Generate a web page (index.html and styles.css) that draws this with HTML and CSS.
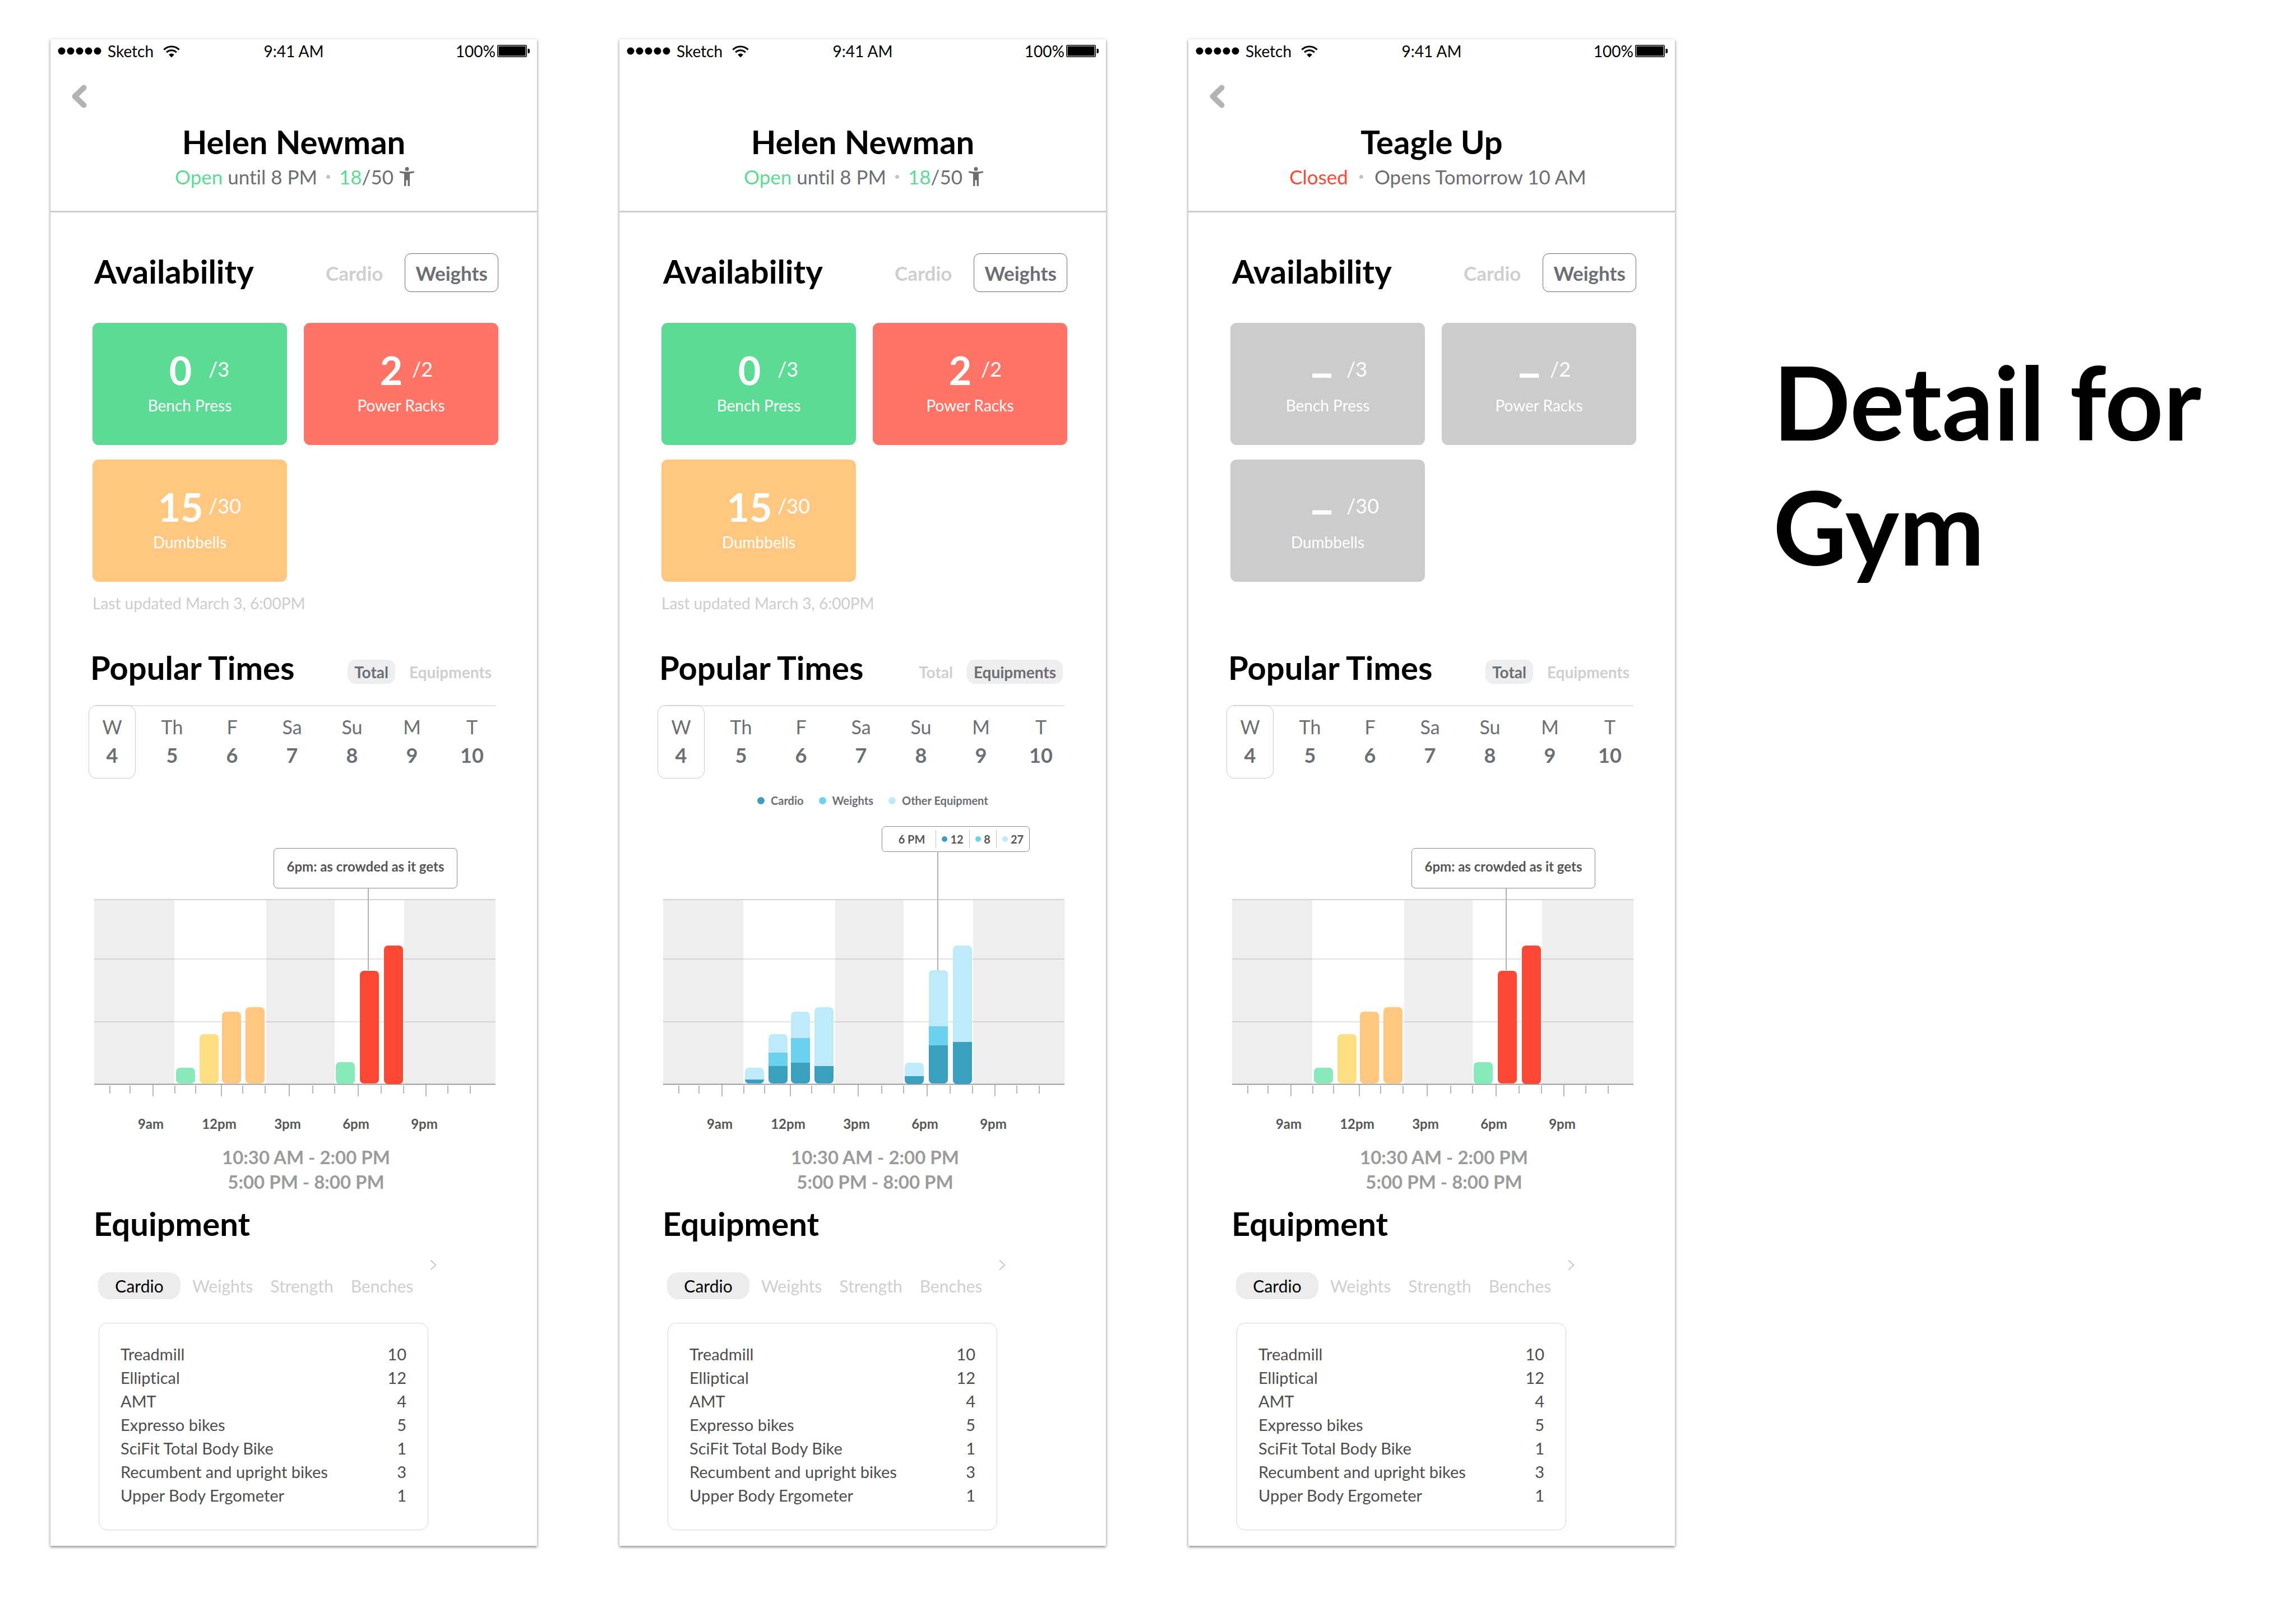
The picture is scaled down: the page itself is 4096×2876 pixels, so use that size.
FILE: index.html
```html
<!DOCTYPE html>
<html lang="en">
<head>
<meta charset="utf-8">
<meta name="viewport" content="width=device-width, initial-scale=1">
<title>Detail for Gym</title>
<link rel="stylesheet" href="styles.css">
</head>
<body>
<svg class="sprite" aria-hidden="true">
  <symbol id="wifi" viewBox="0 0 30 22">
    <path d="M2 8.2a18.4 18.4 0 0 1 26 0" fill="none" stroke="#000" stroke-width="3"/>
    <path d="M6.6 12.8a11.9 11.9 0 0 1 16.8 0" fill="none" stroke="#000" stroke-width="3"/>
    <path d="M15 21.6l-4.6-4.8a6.6 6.6 0 0 1 9.2 0z"/>
  </symbol>
  <symbol id="battery" viewBox="0 0 58 22">
    <rect x=".75" y=".75" width="51.5" height="20.5" rx="2" fill="none" stroke="#000" stroke-width="1.5"/>
    <rect x="2.5" y="2.5" width="48" height="17" rx="1"/>
    <path d="M54.500 7h1.500a2 2 0 0 1 2 2v4a2 2 0 0 1-2 2h-1.500z"/>
  </symbol>
  <symbol id="dots" viewBox="0 0 78 14">
    <circle cx="7" cy="7" r="6.500"/><circle cx="23" cy="7" r="6.500"/><circle cx="39" cy="7" r="6.500"/><circle cx="55" cy="7" r="6.500"/><circle cx="71" cy="7" r="6.500"/>
  </symbol>
  <symbol id="back" viewBox="0 0 28 42">
    <path d="M22.500 5.500L6.500 21l16 15.500" fill="none" stroke="#b3b3b3" stroke-width="10" stroke-linecap="round" stroke-linejoin="round"/>
  </symbol>
  <symbol id="next" viewBox="0 0 14 20">
    <path d="M2 1.500l9.500 8.500L2 18.500" fill="none" stroke="#c8c8c8" stroke-width="2"/>
  </symbol>
  <symbol id="person" viewBox="0 0 28 34">
    <circle cx="14" cy="3.500" r="3.500"/>
    <path d="M1.300 7.200Q14 9.800 26.700 7.200L27.300 10Q23 11.300 19 11.700V34H15.600V23.500H12.400V34H9V11.700Q5 11.300 .7 10z"/>
  </symbol>
  <symbol id="plot" viewBox="0 0 716 352">
    <path d="M0 0h143v330H0zM307 0h122v330H307zM553 0h163v330H553z" fill="#eee"/>
    <path d="M0 1h716" stroke="#d2d2d2" stroke-width="2"/>
    <path d="M0 107h716M0 219h716" stroke="#000" stroke-opacity=".11" stroke-width="2"/>
    <path d="M0 330.500h716" stroke="#9b9b9b" stroke-width="2"/>
    <path d="M28 333v14M64 333v14M144 333v14M181 333v14M265 333v14M305 333v14M390 333v14M429 333v14M512 333v14M552 333v14M631 333v14M671 333v14M105 330v22M227 330v22M348 330v22M471 330v22M592 330v22" stroke="#a0a0a0" stroke-width="1.500"/>
  </symbol>
  <symbol id="total-bars" viewBox="0 0 716 352">
    <g fill="#88eaba"><rect x="146" y="301" width="34" height="28" rx="7"/><rect x="431" y="291" width="34" height="39" rx="7"/></g>
    <rect x="188" y="241" width="34" height="88" rx="7" fill="#fede82"/>
    <g fill="#ffc77f"><rect x="228" y="201" width="34" height="128" rx="7"/><rect x="270" y="193" width="34" height="136" rx="7"/></g>
    <g fill="#fd4835"><rect x="474" y="128" width="34" height="201" rx="7"/><rect x="517" y="83" width="34" height="247" rx="7"/></g>
  </symbol>
  <symbol id="stacked-bars" viewBox="0 0 716 352">
    <g fill="#beeafa"><rect x="146" y="301" width="34" height="28" rx="7"/><rect x="188" y="241" width="34" height="88" rx="7"/><rect x="228" y="201" width="34" height="128" rx="7"/><rect x="270" y="193" width="34" height="136" rx="7"/><rect x="431" y="292" width="34" height="37" rx="7"/><rect x="474" y="127" width="34" height="202" rx="7"/><rect x="517" y="83" width="34" height="246" rx="7"/></g>
    <g fill="#6bd1ef"><path d="M188 274h34v30h-34zM228 248h34v50h-34zM474 227h34v40h-34z"/></g>
    <g fill="#3b9fbe"><path d="M146 322h34a7 7 0 0 1-7 7h-20a7 7 0 0 1-7-7z"/><path d="M188 298h34v24a7 7 0 0 1-7 7h-20a7 7 0 0 1-7-7z"/><path d="M228 292h34v30a7 7 0 0 1-7 7h-20a7 7 0 0 1-7-7z"/><path d="M270 298h34v24a7 7 0 0 1-7 7h-20a7 7 0 0 1-7-7z"/><path d="M431 316h34v7a7 7 0 0 1-7 7h-20a7 7 0 0 1-7-7z"/><path d="M474 261h34v61a7 7 0 0 1-7 7h-20a7 7 0 0 1-7-7z"/><path d="M517 255h34v68a7 7 0 0 1-7 7h-20a7 7 0 0 1-7-7z"/></g>
  </symbol>
</svg>

<main class="board">

  <article class="phone">
    <div class="status">
      <span class="status-left"><svg class="dots"><use href="#dots"/></svg><span>Sketch</span><svg class="wifi"><use href="#wifi"/></svg></span>
      <span class="status-time">9:41 AM</span>
      <span class="status-right"><span>100%</span><svg class="battery"><use href="#battery"/></svg></span>
    </div>
    <header class="gym">
      <nav class="gym-nav"><button class="back" aria-label="Back"><svg><use href="#back"/></svg></button></nav>
      <h2 class="gym-name">Helen Newman</h2>
      <p class="gym-state"><span><span class="is-open">Open</span> until 8 PM</span><i class="sep"></i><span><span class="is-open">18</span>/50</span><svg class="person"><use href="#person"/></svg></p>
    </header>
    <section class="availability">
      <div class="section-head">
        <h3 class="heading">Availability</h3>
        <div class="switch"><button class="switch-item">Cardio</button><button class="switch-item is-active">Weights</button></div>
      </div>
      <div class="availability-body">
        <div class="tiles">
          <div class="tile tile-green"><p class="count"><b>0</b><span>/3</span></p><p class="tile-name">Bench Press</p></div>
          <div class="tile tile-red"><p class="count count-tight"><b>2</b><span>/2</span></p><p class="tile-name">Power Racks</p></div>
          <div class="tile tile-orange"><p class="count"><b>15</b><span>/30</span></p><p class="tile-name">Dumbbells</p></div>
        </div>
        <p class="updated">Last updated March 3, 6:00PM</p>
      </div>
    </section>
    <section class="popular">
      <div class="section-head">
        <h3 class="heading">Popular Times</h3>
        <div class="pills"><button class="pill is-active">Total</button><button class="pill">Equipments</button></div>
      </div>
      <div class="days">
        <button class="day is-active"><span>W</span><b>4</b></button><button class="day"><span>Th</span><b>5</b></button><button class="day"><span>F</span><b>6</b></button><button class="day"><span>Sa</span><b>7</b></button><button class="day"><span>Su</span><b>8</b></button><button class="day"><span>M</span><b>9</b></button><button class="day"><span>T</span><b>10</b></button>
      </div>
      <figure class="chart">
        <div class="chart-top"></div>
        <svg class="plot" viewBox="0 0 716 352"><use href="#plot"/><use href="#total-bars"/></svg>
        <div class="tip tip-note">6pm: as crowded as it gets</div>
        <div class="hours-axis"><span>9am</span><span>12pm</span><span>3pm</span><span>6pm</span><span>9pm</span></div>
        <figcaption class="hours">10:30 AM - 2:00 PM<br>5:00 PM - 8:00 PM</figcaption>
      </figure>
    </section>
    <section class="equipment">
      <h3 class="heading">Equipment</h3>
      <div class="more"><button class="next" aria-label="More equipment"><svg><use href="#next"/></svg></button></div>
      <div class="tabs"><button class="tab is-active">Cardio</button><button class="tab">Weights</button><button class="tab">Strength</button><button class="tab">Benches</button></div>
      <div class="list">
        <table>
          <tr><th scope="row">Treadmill</th><td>10</td></tr>
          <tr><th scope="row">Elliptical</th><td>12</td></tr>
          <tr><th scope="row">AMT</th><td>4</td></tr>
          <tr><th scope="row">Expresso bikes</th><td>5</td></tr>
          <tr><th scope="row">SciFit Total Body Bike</th><td>1</td></tr>
          <tr><th scope="row">Recumbent and upright bikes</th><td>3</td></tr>
          <tr><th scope="row">Upper Body Ergometer</th><td>1</td></tr>
        </table>
      </div>
    </section>
  </article>

  <article class="phone">
    <div class="status">
      <span class="status-left"><svg class="dots"><use href="#dots"/></svg><span>Sketch</span><svg class="wifi"><use href="#wifi"/></svg></span>
      <span class="status-time">9:41 AM</span>
      <span class="status-right"><span>100%</span><svg class="battery"><use href="#battery"/></svg></span>
    </div>
    <header class="gym">
      <nav class="gym-nav"></nav>
      <h2 class="gym-name">Helen Newman</h2>
      <p class="gym-state"><span><span class="is-open">Open</span> until 8 PM</span><i class="sep"></i><span><span class="is-open">18</span>/50</span><svg class="person"><use href="#person"/></svg></p>
    </header>
    <section class="availability">
      <div class="section-head">
        <h3 class="heading">Availability</h3>
        <div class="switch"><button class="switch-item">Cardio</button><button class="switch-item is-active">Weights</button></div>
      </div>
      <div class="availability-body">
        <div class="tiles">
          <div class="tile tile-green"><p class="count"><b>0</b><span>/3</span></p><p class="tile-name">Bench Press</p></div>
          <div class="tile tile-red"><p class="count count-tight"><b>2</b><span>/2</span></p><p class="tile-name">Power Racks</p></div>
          <div class="tile tile-orange"><p class="count"><b>15</b><span>/30</span></p><p class="tile-name">Dumbbells</p></div>
        </div>
        <p class="updated">Last updated March 3, 6:00PM</p>
      </div>
    </section>
    <section class="popular">
      <div class="section-head">
        <h3 class="heading">Popular Times</h3>
        <div class="pills pills-inset"><button class="pill">Total</button><button class="pill is-active">Equipments</button></div>
      </div>
      <div class="days">
        <button class="day is-active"><span>W</span><b>4</b></button><button class="day"><span>Th</span><b>5</b></button><button class="day"><span>F</span><b>6</b></button><button class="day"><span>Sa</span><b>7</b></button><button class="day"><span>Su</span><b>8</b></button><button class="day"><span>M</span><b>9</b></button><button class="day"><span>T</span><b>10</b></button>
      </div>
      <figure class="chart">
        <div class="chart-top">
          <ul class="legend"><li class="key-cardio">Cardio</li><li class="key-weights">Weights</li><li class="key-other">Other Equipment</li></ul>
        </div>
        <svg class="plot" viewBox="0 0 716 352"><use href="#plot"/><use href="#stacked-bars"/></svg>
        <div class="tip tip-split"><span class="tip-hour">6 PM</span><span class="key-cardio">12</span><span class="key-weights">8</span><span class="key-other">27</span></div>
        <div class="hours-axis"><span>9am</span><span>12pm</span><span>3pm</span><span>6pm</span><span>9pm</span></div>
        <figcaption class="hours">10:30 AM - 2:00 PM<br>5:00 PM - 8:00 PM</figcaption>
      </figure>
    </section>
    <section class="equipment">
      <h3 class="heading">Equipment</h3>
      <div class="more"><button class="next" aria-label="More equipment"><svg><use href="#next"/></svg></button></div>
      <div class="tabs"><button class="tab is-active">Cardio</button><button class="tab">Weights</button><button class="tab">Strength</button><button class="tab">Benches</button></div>
      <div class="list">
        <table>
          <tr><th scope="row">Treadmill</th><td>10</td></tr>
          <tr><th scope="row">Elliptical</th><td>12</td></tr>
          <tr><th scope="row">AMT</th><td>4</td></tr>
          <tr><th scope="row">Expresso bikes</th><td>5</td></tr>
          <tr><th scope="row">SciFit Total Body Bike</th><td>1</td></tr>
          <tr><th scope="row">Recumbent and upright bikes</th><td>3</td></tr>
          <tr><th scope="row">Upper Body Ergometer</th><td>1</td></tr>
        </table>
      </div>
    </section>
  </article>

  <article class="phone">
    <div class="status">
      <span class="status-left"><svg class="dots"><use href="#dots"/></svg><span>Sketch</span><svg class="wifi"><use href="#wifi"/></svg></span>
      <span class="status-time">9:41 AM</span>
      <span class="status-right"><span>100%</span><svg class="battery"><use href="#battery"/></svg></span>
    </div>
    <header class="gym">
      <nav class="gym-nav"><button class="back" aria-label="Back"><svg><use href="#back"/></svg></button></nav>
      <h2 class="gym-name">Teagle Up</h2>
      <p class="gym-state gym-state-closed"><span class="is-closed">Closed</span><i class="sep"></i><span>Opens Tomorrow 10 AM</span></p>
    </header>
    <section class="availability">
      <div class="section-head">
        <h3 class="heading">Availability</h3>
        <div class="switch"><button class="switch-item">Cardio</button><button class="switch-item is-active">Weights</button></div>
      </div>
      <div class="availability-body">
        <div class="tiles">
          <div class="tile"><p class="count count-empty"><b>–</b><span>/3</span></p><p class="tile-name">Bench Press</p></div>
          <div class="tile"><p class="count count-empty count-tight"><b>–</b><span>/2</span></p><p class="tile-name">Power Racks</p></div>
          <div class="tile"><p class="count count-empty"><b>–</b><span>/30</span></p><p class="tile-name">Dumbbells</p></div>
        </div>
      </div>
    </section>
    <section class="popular">
      <div class="section-head">
        <h3 class="heading">Popular Times</h3>
        <div class="pills"><button class="pill is-active">Total</button><button class="pill">Equipments</button></div>
      </div>
      <div class="days">
        <button class="day is-active"><span>W</span><b>4</b></button><button class="day"><span>Th</span><b>5</b></button><button class="day"><span>F</span><b>6</b></button><button class="day"><span>Sa</span><b>7</b></button><button class="day"><span>Su</span><b>8</b></button><button class="day"><span>M</span><b>9</b></button><button class="day"><span>T</span><b>10</b></button>
      </div>
      <figure class="chart">
        <div class="chart-top"></div>
        <svg class="plot" viewBox="0 0 716 352"><use href="#plot"/><use href="#total-bars"/></svg>
        <div class="tip tip-note">6pm: as crowded as it gets</div>
        <div class="hours-axis"><span>9am</span><span>12pm</span><span>3pm</span><span>6pm</span><span>9pm</span></div>
        <figcaption class="hours">10:30 AM - 2:00 PM<br>5:00 PM - 8:00 PM</figcaption>
      </figure>
    </section>
    <section class="equipment">
      <h3 class="heading">Equipment</h3>
      <div class="more"><button class="next" aria-label="More equipment"><svg><use href="#next"/></svg></button></div>
      <div class="tabs"><button class="tab is-active">Cardio</button><button class="tab">Weights</button><button class="tab">Strength</button><button class="tab">Benches</button></div>
      <div class="list">
        <table>
          <tr><th scope="row">Treadmill</th><td>10</td></tr>
          <tr><th scope="row">Elliptical</th><td>12</td></tr>
          <tr><th scope="row">AMT</th><td>4</td></tr>
          <tr><th scope="row">Expresso bikes</th><td>5</td></tr>
          <tr><th scope="row">SciFit Total Body Bike</th><td>1</td></tr>
          <tr><th scope="row">Recumbent and upright bikes</th><td>3</td></tr>
          <tr><th scope="row">Upper Body Ergometer</th><td>1</td></tr>
        </table>
      </div>
    </section>
  </article>

  <h1 class="board-title">Detail for Gym</h1>
</main>
</body>
</html>
```
FILE: styles.css
```css
* { box-sizing: border-box; }

body {
  margin: 0;
  background: #fff;
  color: #000;
  font: 400 28px/34px Lato, "Liberation Sans", sans-serif;
  font-variant-ligatures: none;
}

h1, h2, h3, p, ul, figure { margin: 0; padding: 0; }
ul { list-style: none; }
svg { display: block; }

button {
  margin: 0;
  padding: 0;
  border: 0;
  background: none;
  color: inherit;
  font: inherit;
  cursor: pointer;
}

.sprite { position: absolute; width: 0; height: 0; }

.board {
  display: grid;
  grid-template-columns: 868fr 868fr 868fr 961fr;
  align-items: start;
  column-gap: 147px;
  padding: 70px 0 110px 90px;
}

.board-title {
  padding: 534px 0 0 28px;
  font-size: 182px;
  line-height: 223px;
  font-weight: 700;
}

.phone {
  padding: 4px 0 28px;
  background: #fff;
  box-shadow: 0 2px 5px rgba(0, 0, 0, .5);
}

/* Status bar */
.status {
  display: grid;
  grid-template-columns: 1fr auto 1fr;
  align-items: center;
  padding: 0 13px;
}
.status-left, .status-right { display: flex; align-items: center; }
.status-right { justify-content: flex-end; gap: 3px; }
.dots { width: 78px; height: 14px; margin-right: 11px; }
.wifi { width: 32px; height: 23px; margin-left: 16px; }
.battery { width: 58px; height: 22px; }

/* Gym header */
.gym {
  padding-bottom: 39px;
  border-bottom: 3px solid #cdcdcd;
  text-align: center;
}
.gym-nav { display: flex; min-height: 85px; padding: 43px 37px 0; }
.back svg { width: 28px; height: 42px; }
.gym-name {
  margin-top: 28px;
  font-size: 58px;
  line-height: 64px;
  font-weight: 700;
}
.gym-state {
  display: flex;
  align-items: center;
  justify-content: center;
  margin-top: 8px;
  padding-left: 4px;
  font-size: 35px;
  line-height: 44px;
  color: #6b6e73;
}
.is-open { color: #5cdb95; }
.is-closed { color: #fd4835; }
.sep {
  width: 7px;
  height: 7px;
  margin: 0 16px;
  border-radius: 50%;
  background: #c4c4c4;
}
.person { width: 28px; height: 34px; margin-left: 10px; fill: #6b6e73; }
.gym-state-closed { padding-left: 22px; }
.gym-state-closed .sep { margin: 0 20px; }

/* Sections */
.section-head { display: flex; align-items: flex-start; justify-content: space-between; }
.heading { font-size: 58px; line-height: 64px; font-weight: 700; }

.availability { padding: 73px 69px 0 75px; }
.availability .heading, .popular .heading { padding-left: 3px; }
.switch { display: flex; gap: 20px; font-size: 35px; font-weight: 700; color: #cfcfcf; }
.switch-item { height: 69px; padding: 0 18px; border: 1px solid transparent; border-radius: 11px; }
.switch-item.is-active { border-color: #6b6e73; color: #6b6e73; }

.availability-body { min-height: 572px; padding-top: 55px; }
.tiles { display: grid; grid-template-columns: 1fr 1fr; gap: 26px 30px; }
.tile {
  height: 218px;
  padding-top: 42px;
  border-radius: 11px;
  background: #ccc;
  color: #fff;
}
.tile-green { background: #5cdb95; }
.tile-red { background: #ff7467; }
.tile-orange { background: #ffc77f; }
.count {
  display: grid;
  grid-template-columns: 100px auto;
  height: 84px;
  padding-left: 107px;
  font-size: 36px;
  line-height: 80px;
}
.count b { font-size: 70px; line-height: 84px; font-weight: 700; text-align: center; }
.count-empty b { padding-left: 12px; font-size: 84px; line-height: 92px; }
.count-tight { grid-template-columns: 74px auto; padding-left: 119px; }
.count-tight b { padding-left: 0; }
.tile-name { margin-top: 4px; text-align: center; }
.updated { margin-top: 21px; color: #cdcdcd; }

/* Popular times */
.popular { padding: 66px 69px 0 68px; }
.pills { display: flex; gap: 13px; margin-top: 18px; font-weight: 700; color: #cfcfcf; }
.pills-inset { padding-right: 8px; }
.pill { height: 43px; padding: 0 12px; border-radius: 14px; }
.pill.is-active { background: #eee; color: #6b6e73; }

.days {
  display: flex;
  justify-content: space-between;
  margin: 35px 5px 0 0;
  background: linear-gradient(#e3e3e3, #e3e3e3) right top / calc(100% - 12px) 2px no-repeat;
  color: #6b6e73;
}
.day {
  display: flex;
  flex-direction: column;
  align-items: center;
  width: 84px;
  height: 131px;
  padding-top: 16px;
  border: 1px solid transparent;
  border-radius: 14px;
  font-size: 34px;
  line-height: 44px;
}
.day b { font-size: 36px; line-height: 56px; font-weight: 700; }
.day.is-active { border-color: #c9c9c9; }

.chart { position: relative; margin: 0 5px 0 10px; color: #555; }
.chart-top { height: 215px; padding-top: 25px; }
.plot { width: 100%; height: auto; }

.legend {
  display: flex;
  gap: 27px;
  padding-left: 168px;
  font-size: 20px;
  line-height: 28px;
  font-weight: 700;
  color: #6b6e73;
}
.legend li { display: flex; align-items: center; gap: 11px; }
.legend li::before { content: ""; width: 13px; height: 13px; border-radius: 50%; background: var(--key); }
.key-cardio { --key: #3b9fbe; }
.key-weights { --key: #6bd1ef; }
.key-other { --key: #beeafa; }

.tip {
  position: absolute;
  border: 1px solid #8a8a8a;
  border-radius: 7px;
  background: #fff;
  font-weight: 700;
}
.tip::after { content: ""; position: absolute; top: 100%; width: 2px; background: #b0b0b0; }
.tip-note {
  top: 124px;
  left: 320px;
  width: 328px;
  height: 72px;
  font-size: 24px;
  line-height: 64px;
  text-align: center;
}
.tip-note::after { left: 167px; height: 147px; }
.tip-split {
  top: 85px;
  left: 390px;
  display: grid;
  grid-template-columns: 95px 60px 48px 59px;
  align-items: center;
  height: 46px;
  font-size: 20px;
  line-height: 32px;
}
.tip-split::after { left: 98px; height: 212px; }
.tip-split span { display: flex; align-items: center; justify-content: center; gap: 5px; }
.tip-split .tip-hour { padding-left: 10px; }
.tip-split span + span { border-left: 1px solid #c4c4c4; }
.tip-split span + span::before { content: ""; width: 10px; height: 10px; border-radius: 50%; background: var(--key); }

.hours-axis {
  display: grid;
  grid-template-columns: repeat(5, 122px);
  margin-top: 34px;
  padding-left: 40px;
  font-size: 24px;
  line-height: 30px;
  font-weight: 700;
  text-align: center;
}
.hours {
  margin-top: 22px;
  padding-left: 40px;
  font-size: 33px;
  line-height: 44px;
  font-weight: 700;
  text-align: center;
  color: #9b9b9b;
}

/* Equipment */
.equipment { padding: 21px 178px 0 77px; }
.more { display: flex; justify-content: flex-end; padding-top: 32px; }
.next svg { width: 14px; height: 20px; }
.tabs { display: flex; align-items: center; gap: 31px; margin: 3px 0 0 8px; font-size: 30px; color: #cfcfcf; }
.tab.is-active { width: 147px; height: 48px; margin-right: -10px; border-radius: 20px; background: #ececec; color: #000; }
.list {
  margin: 42px 16px 0 9px;
  padding: 34px 38px 40px;
  border: 1px solid #d6d6d6;
  border-radius: 15px;
}
.list table { width: 100%; border-collapse: collapse; color: #4d4d4d; font-size: 29px; line-height: 42px; }
.list th, .list td { padding: 0; font-weight: 400; text-align: left; }
.list td { text-align: right; }
```
